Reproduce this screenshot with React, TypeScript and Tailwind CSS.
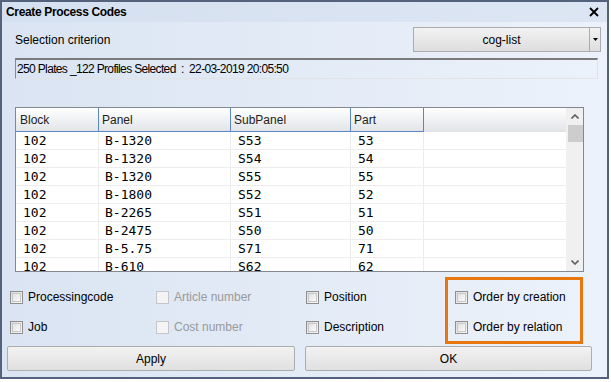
import React from "react";

const rows = [
  ["102", "B-1320", "S53", "53"],
  ["102", "B-1320", "S54", "54"],
  ["102", "B-1320", "S55", "55"],
  ["102", "B-1800", "S52", "52"],
  ["102", "B-2265", "S51", "51"],
  ["102", "B-2475", "S50", "50"],
  ["102", "B-5.75", "S71", "71"],
  ["102", "B-610", "S62", "62"],
];

function Check({ label, disabled }: { label: string; disabled?: boolean }) {
  return (
    <div className="flex items-center h-[16px]">
      <div
        className={
          disabled
            ? "w-[13px] h-[13px] border border-[#c4c6c9] bg-gradient-to-br from-[#f0f0f0] to-[#fbfbfb]"
            : "w-[13px] h-[13px] border border-[#8f8f8f] bg-gradient-to-br from-[#dcdcdc] to-[#f8f8f8] p-[1px]"
        }
      >
        <div className={disabled ? "w-full h-full bg-[#f4f4f4]" : "w-full h-full border border-[#c8c8c8] bg-gradient-to-br from-[#e2e2e2] to-[#fafafa]"} />
      </div>
      <span className={"ml-[5px] text-[12px] " + (disabled ? "text-[#9a9a9a]" : "text-black")}>{label}</span>
    </div>
  );
}

export default function App() {
  const cell = "flex items-center border-r border-[#ececec] h-full";
  return (
    <div className="w-[611px] h-[382px] bg-white" style={{ fontFamily: '"Liberation Sans", Arial, sans-serif' }}>
      <div className="w-[609px] h-[379px] border-2 border-[#55627e] flex flex-col bg-gradient-to-r from-[#dae4f2] to-[#ecf2fb]">
        {/* Title bar */}
        <div className="h-[20px] shrink-0 flex items-center justify-between bg-gradient-to-r from-[#d5e0f0] to-[#dce6f3] pl-[4px] pr-[8px]">
          <span className="text-[12px] font-bold text-black tracking-[-0.35px]">Create Process Codes</span>
          <svg width="10" height="10" viewBox="0 0 10 10">
            <path d="M1 1 L9 9 M9 1 L1 9" stroke="#000" strokeWidth="1.8" />
          </svg>
        </div>
        {/* Body */}
        <div className="flex-1 flex flex-col">
          <div className="flex items-start justify-between mt-[5px] pl-[13px] pr-[6px]">
            <span className="text-[12px] text-black mt-[4px]">Selection criterion</span>
            <div className="w-[188px] h-[25px] flex border border-[#acacac] bg-gradient-to-b from-[#f2f2f2] to-[#dedede]">
              <div className="flex-1 flex items-center justify-center text-[12px] text-black">cog-list</div>
              <div className="w-[11px] border-l border-[#acacac] flex items-center justify-center">
                <svg width="5" height="3" viewBox="0 0 5 3"><path d="M0 0 H5 L2.5 3 Z" fill="#000" /></svg>
              </div>
            </div>
          </div>
          <div className="mt-[6px] ml-[13px] w-[583px] h-[21px] border-t-2 border-l border-t-[#7a7a7a] border-l-[#8a8a8a] border-r border-b border-r-[#e3e3e3] border-b-[#e3e3e3] flex items-center pl-[1px] text-[12px] tracking-[-0.65px] text-black whitespace-pre">
            {"250 Plates _122 Profiles Selected  :  22-03-2019 20:05:50"}
          </div>
          {/* Table */}
          <div className="mt-[28px] ml-[13px] w-[569px] h-[165px] shrink-0 border border-[#828790] bg-white flex">
            <div className="flex-1 flex flex-col overflow-hidden">
              <div className="h-[24px] shrink-0 flex bg-gradient-to-b from-white to-[#e1e3e7] text-[12px] text-[#222]">
                <div className="w-[83px] border-r border-b border-[#5a87c3] flex items-center pl-[4px]">Block</div>
                <div className="w-[132px] border-r border-b border-[#5a87c3] flex items-center pl-[3px]">Panel</div>
                <div className="w-[120px] border-r border-b border-[#5a87c3] flex items-center pl-[3px]">SubPanel</div>
                <div className="w-[73px] border-r border-b border-[#5a87c3] flex items-center pl-[3px]">Part</div>
                <div className="flex-1" />
              </div>
              {rows.map((r, i) => (
                <div
                  key={i}
                  className="h-[18px] shrink-0 flex border-b border-[#ededed] text-[13px] text-black"
                  style={{ fontFamily: '"DejaVu Sans Mono", monospace' }}
                >
                  <div className={cell + " w-[83px] pl-[7px]"}>{r[0]}</div>
                  <div className={cell + " w-[132px] pl-[6px]"}>{r[1]}</div>
                  <div className={cell + " w-[120px] pl-[7px]"}>{r[2]}</div>
                  <div className={cell + " w-[73px] pl-[7px]"}>{r[3]}</div>
                  <div className="flex-1" />
                </div>
              ))}
            </div>
            <div className="w-[17px] bg-[#f0f0f0] flex flex-col items-center justify-between border-l border-[#f0f0f0]">
              <div className="flex flex-col items-center w-full">
                <div className="h-[17px] flex items-center justify-center">
                  <svg width="8" height="5" viewBox="0 0 8 5"><path d="M0.5 4.5 L4 1 L7.5 4.5" stroke="#606060" strokeWidth="1.6" fill="none" /></svg>
                </div>
                <div className="w-[15px] h-[17px] bg-[#cdcdcd]" />
              </div>
              <div className="h-[17px] flex items-center justify-center">
                <svg width="8" height="5" viewBox="0 0 8 5"><path d="M0.5 0.5 L4 4 L7.5 0.5" stroke="#606060" strokeWidth="1.6" fill="none" /></svg>
              </div>
            </div>
          </div>
          {/* Checkboxes */}
          <div className="flex mt-[5px] ml-[8px]">
            <div className="w-[146px] flex flex-col gap-[14px] pt-[12px]">
              <Check label="Processingcode" />
              <Check label="Job" />
            </div>
            <div className="w-[150px] flex flex-col gap-[14px] pt-[12px]">
              <Check label="Article number" disabled />
              <Check label="Cost number" disabled />
            </div>
            <div className="w-[139px] flex flex-col gap-[14px] pt-[12px]">
              <Check label="Position" />
              <Check label="Description" />
            </div>
            <div className="w-[138px] h-[67px] border-[3px] border-[#e8760f] flex flex-col gap-[14px] pt-[9px] pl-[7px]">
              <Check label="Order by creation" />
              <Check label="Order by relation" />
            </div>
          </div>
          {/* Buttons */}
          <div className="flex mt-[2px] ml-[5px] gap-[10px]">
            <div className="w-[288px] h-[25px] border border-[#adadad] rounded-[2px] bg-gradient-to-b from-[#f2f2f2] to-[#e0e0e0] flex items-center justify-center text-[12px] text-black">Apply</div>
            <div className="w-[287px] h-[25px] border border-[#adadad] rounded-[2px] bg-gradient-to-b from-[#f2f2f2] to-[#e0e0e0] flex items-center justify-center text-[12px] text-black">OK</div>
          </div>
        </div>
      </div>
    </div>
  );
}
